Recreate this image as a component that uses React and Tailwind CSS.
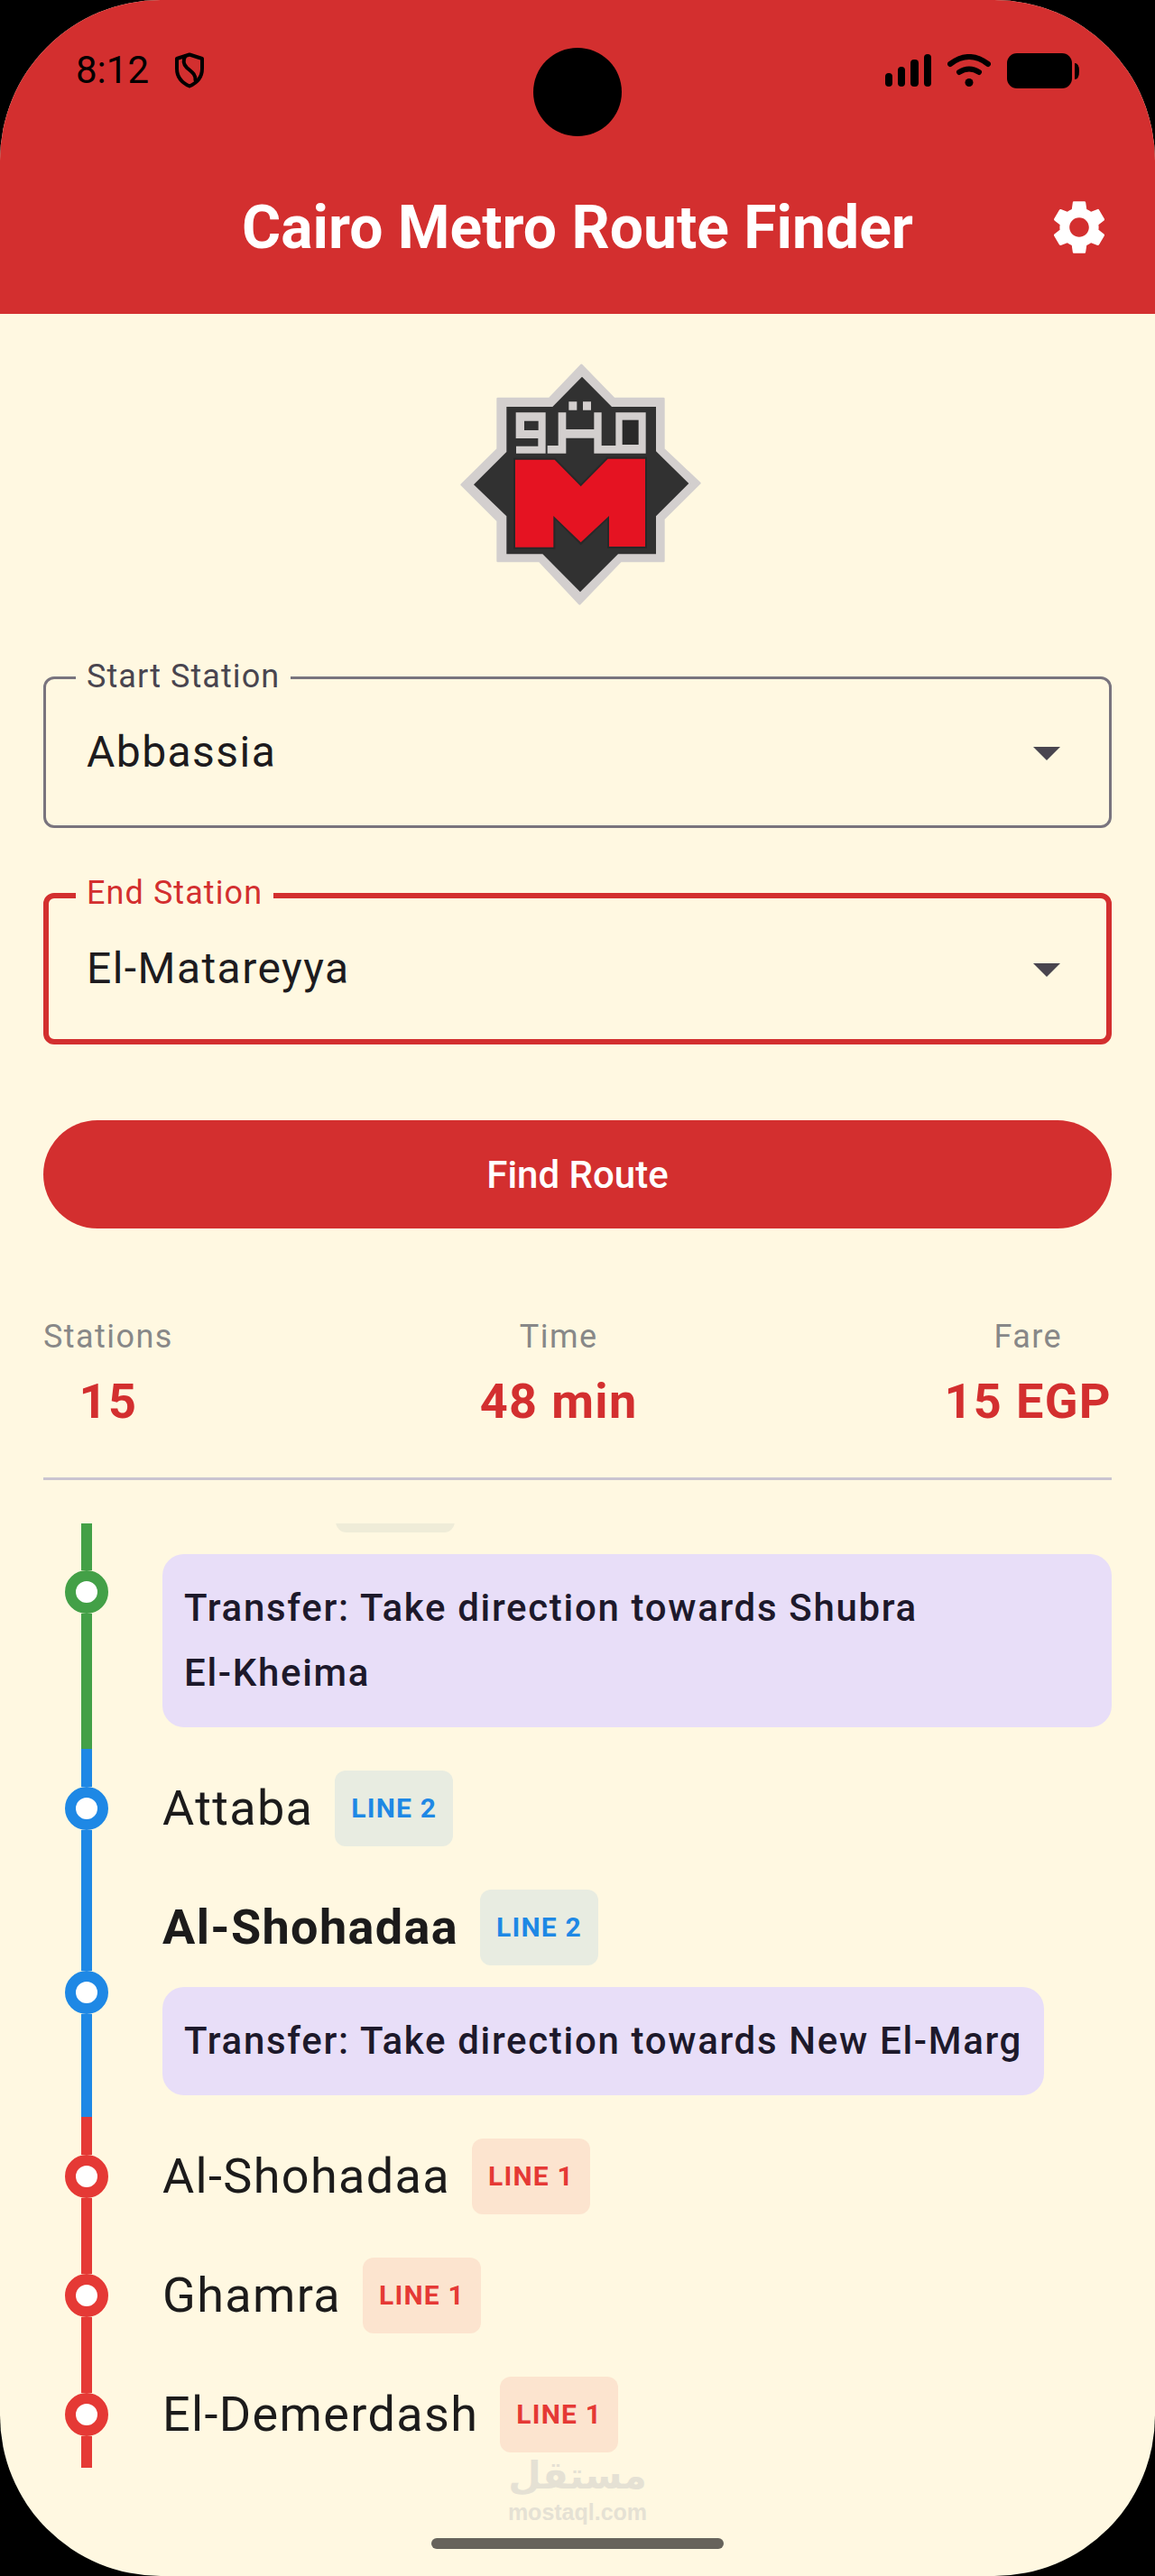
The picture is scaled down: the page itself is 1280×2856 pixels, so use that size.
import React, { useState } from "react";
import { MdArrowDropDown, MdSettings } from "react-icons/md";

const LINES = {
  1: { bar: "bg-[#e53935]", ring: "border-[#e53935]", badge: "bg-[#e53935]/10 text-[#e53935]" },
  2: { bar: "bg-[#1e88e5]", ring: "border-[#1e88e5]", badge: "bg-[#1e88e5]/10 text-[#1e88e5]" },
  3: { bar: "bg-[#43a047]", ring: "border-[#43a047]", badge: "bg-[#efecd8] text-[#43a047]" },
};

const STOPS = [
  { line: 3, transfer: "Transfer: Take direction towards Shubra El-Kheima" },
  { name: "Attaba", line: 2 },
  { name: "Al-Shohadaa", line: 2, transfer: "Transfer: Take direction towards New El-Marg" },
  { name: "Al-Shohadaa", line: 1 },
  { name: "Ghamra", line: 1 },
  { name: "El-Demerdash", line: 1 },
];

const STATIONS = ["Abbassia", "Attaba", "Al-Shohadaa", "Ghamra", "El-Demerdash", "El-Matareyya"];

function StatusBar() {
  return (
    <div className="relative flex h-[156px] items-center justify-between px-[84px]">
      <div className="flex items-center gap-7">
        <span className="text-[42px] leading-[48px] text-black">8:12</span>
        <svg className="h-10 w-[34px]" viewBox="0 0 34 40" fill="none" stroke="#000" strokeLinejoin="round" strokeLinecap="round" aria-hidden="true">
          <path strokeWidth="4" d="M17 2.500 31 7V18C31 27 26 33.500 17 37.500C8 33.500 3 27 3 18V7Z" />
          <path strokeWidth="4" d="M12.500 4C9.500 9 10 13 14 17C19 21.500 24 24 23.500 31" />
        </svg>
      </div>
      <div className="absolute top-[53px] left-1/2 h-[98px] w-[98px] -translate-x-1/2 rounded-full bg-black" />
      <div className="flex items-center gap-[18px]">
        <svg className="h-9 w-[51px]" viewBox="0 0 51 36" aria-hidden="true">
          <rect x="0" y="21" width="8" height="15" rx="4" />
          <rect x="14" y="14" width="8" height="22" rx="4" />
          <rect x="28" y="6" width="9" height="30" rx="4" />
          <rect x="43" y="0" width="8" height="36" rx="4" />
        </svg>
        <svg className="h-9 w-12" viewBox="0 0 48 36" fill="none" stroke="#000" strokeWidth="6" strokeLinecap="round" aria-hidden="true">
          <path d="M3 11Q24 -5 45 11" />
          <path d="M13 20Q24 13 35 20" />
          <circle cx="24" cy="31.500" r="4.500" fill="#000" stroke="none" />
        </svg>
        <svg className="h-[39px] w-20" viewBox="0 0 80 39" aria-hidden="true">
          <rect width="72" height="39" rx="11" />
          <path d="M75 11Q80 11 80 19.500Q80 29 75 29Z" />
        </svg>
      </div>
    </div>
  );
}

function MetroLogo() {
  return (
    <svg className="h-[268px] w-[273px]" viewBox="42 40 819 804" role="img" aria-label="Cairo Metro">
      <path fill="#d3cfce" strokeLinejoin="round" stroke="#d3cfce" strokeWidth="8" d="M463 46 571 157H736V325L856 438 736 557V697H593L457 839 324 697H185V563L65 443 185 325V157H357Z" />
      <path fill="#313131" d="M465 84 564 184H711V332L820 439 711 548V674H585L459 800 334 674H214V548L105 443 214 334V184H367Z" />
      <path fill="none" stroke="#1f1f1f" strokeWidth="8" opacity=".5" d="M241 358H374L461 446 550 355H677V651H553V550L461 638 372 550V653H241Z" />
      <path fill="#e51322" d="M243 360H374L461 449 551 357H675V649H555V547L461 635 370 547V651H243Z" />
      <path fill="#d3cfce" fillRule="evenodd" d="M245 203H344V339H246V315H319V289H245ZM273 231V262H320V231Z" />
      <path fill="#d3cfce" d="M386 203H412V259H505V203H530V313H577V203H677V339H505V288H412V339H350V313H386Z" />
      <path fill="#292929" d="M599 228H653V310H599Z" />
      <path fill="#d3cfce" d="M421 167H448V195H421ZM468 167H495V195H468Z" />
    </svg>
  );
}

function StationField({ id, label, value, onChange, active }) {
  return (
    <div className="relative">
      <select
        id={id}
        value={value}
        onChange={(e) => onChange(e.target.value)}
        className={
          "block h-[168px] w-full appearance-none rounded-xl bg-transparent text-[48px] tracking-[0.03em] text-[#1d1b1e] outline-none " +
          (active ? "border-[6px] border-[#d32f2f] px-[42px]" : "border-[3px] border-[#79747e] px-[45px]")
        }
      >
        {STATIONS.map((s) => (
          <option key={s}>{s}</option>
        ))}
      </select>
      <label
        htmlFor={id}
        className={
          "absolute -top-6 left-9 bg-[#fff8e1] px-3 text-[36px] leading-[48px] tracking-[0.03em] " +
          (active ? "text-[#d32f2f]" : "text-[#49454f]")
        }
      >
        {label}
      </label>
      <MdArrowDropDown className="pointer-events-none absolute top-12 right-9 size-[72px] text-[#49454f]" aria-hidden="true" />
    </div>
  );
}

function Stat({ label, value }) {
  return (
    <div className="flex flex-col items-center">
      <dt className="text-[36px] leading-[48px] tracking-[0.04em] text-[#888888]">{label}</dt>
      <dd className="text-[54px] leading-[96px] font-bold tracking-wide text-[#d32f2f]">{value}</dd>
    </div>
  );
}

// Hyphenated station names stay on one line.
function Direction({ text }) {
  return (
    <p className="rounded-3xl bg-[#e8def8] p-6 text-[42px] leading-[72px] font-medium tracking-[0.04em] text-[#1d192b]">
      {text.split(/(\S+-\S+)/).map((part, i) =>
        part.includes("-") ? (
          <span key={i} className="whitespace-nowrap">{part}</span>
        ) : (
          part
        )
      )}
    </p>
  );
}

function Stop({ name, line, transfer }) {
  const c = LINES[line];
  return (
    <li className="flex gap-[60px] pl-6">
      <div className="flex w-12 shrink-0 flex-col items-center">
        <div className={"w-3 flex-1 " + c.bar} />
        <div className={"size-12 rounded-full border-[12px] bg-white " + c.ring} />
        <div className={"w-3 flex-1 " + c.bar} />
      </div>
      <div className="flex min-w-0 flex-1 flex-col items-start gap-6 py-6">
        {name ? (
          <div className="flex items-center gap-6">
            <span className={"text-[54px] leading-[84px] tracking-wide text-[#1c1b1b] " + (transfer ? "font-bold" : "font-normal")}>{name}</span>
            <span className={"rounded-xl px-[18px] text-[30px] leading-[84px] font-bold tracking-[0.04em] " + c.badge}>LINE {line}</span>
          </div>
        ) : (
          <div className={"ml-48 h-[84px] w-[132px] rounded-xl " + c.badge} />
        )}
        {transfer && <Direction text={transfer} />}
      </div>
    </li>
  );
}

export default function App() {
  const [start, setStart] = useState("Abbassia");
  const [end, setEnd] = useState("El-Matareyya");
  return (
    <div className="bg-black font-['Roboto',sans-serif]">
      <div className="flex h-screen flex-col overflow-hidden rounded-[178px] bg-[#fff8e1]">
        <header className="bg-[#d32f2f]">
          <StatusBar />
          <div className="grid h-48 grid-cols-[72px_1fr_72px] items-center px-12">
            <h1 className="col-start-2 text-center text-[66px] font-bold whitespace-nowrap text-white">Cairo Metro Route Finder</h1>
            <button type="button" aria-label="Settings" className="text-white">
              <MdSettings className="size-[72px]" />
            </button>
          </div>
        </header>

        <main className="flex min-h-0 flex-1 flex-col px-12">
          <div className="flex justify-center pt-[55px] pb-[79px]">
            <MetroLogo />
          </div>
          <form className="flex flex-col gap-[72px]" onSubmit={(e) => e.preventDefault()}>
            <StationField id="start" label="Start Station" value={start} onChange={setStart} />
            <StationField id="end" label="End Station" value={end} onChange={setEnd} active />
            <button type="submit" className="mt-3 h-[120px] rounded-full bg-[#d32f2f] text-[42px] font-medium text-white">
              Find Route
            </button>
          </form>
          <dl className="mt-24 flex justify-between border-b-[3px] border-[#cac4d0] pb-9">
            <Stat label="Stations" value="15" />
            <Stat label="Time" value="48 min" />
            <Stat label="Fare" value="15 EGP" />
          </dl>
          <div className="mt-12 flex min-h-0 flex-1 flex-col overflow-hidden">
            <ol className="-mt-[98px]">
              {STOPS.map((s, i) => (
                <Stop key={i} {...s} />
              ))}
            </ol>
          </div>
        </main>

        <footer className="relative flex h-[120px] flex-col items-center justify-end pb-[30px]">
          <div className="absolute -top-4 flex flex-col items-center text-[#e5e1d4]">
            <span lang="ar" dir="rtl" className="font-['DejaVu_Sans',sans-serif] text-[42px] leading-[50px] font-bold">مستقل</span>
            <span className="font-['Liberation_Sans',sans-serif] text-[25px] leading-[30px] font-bold">mostaql.com</span>
          </div>
          <div className="h-3 w-[324px] rounded-full bg-[#66635b]" />
        </footer>
      </div>
    </div>
  );
}
